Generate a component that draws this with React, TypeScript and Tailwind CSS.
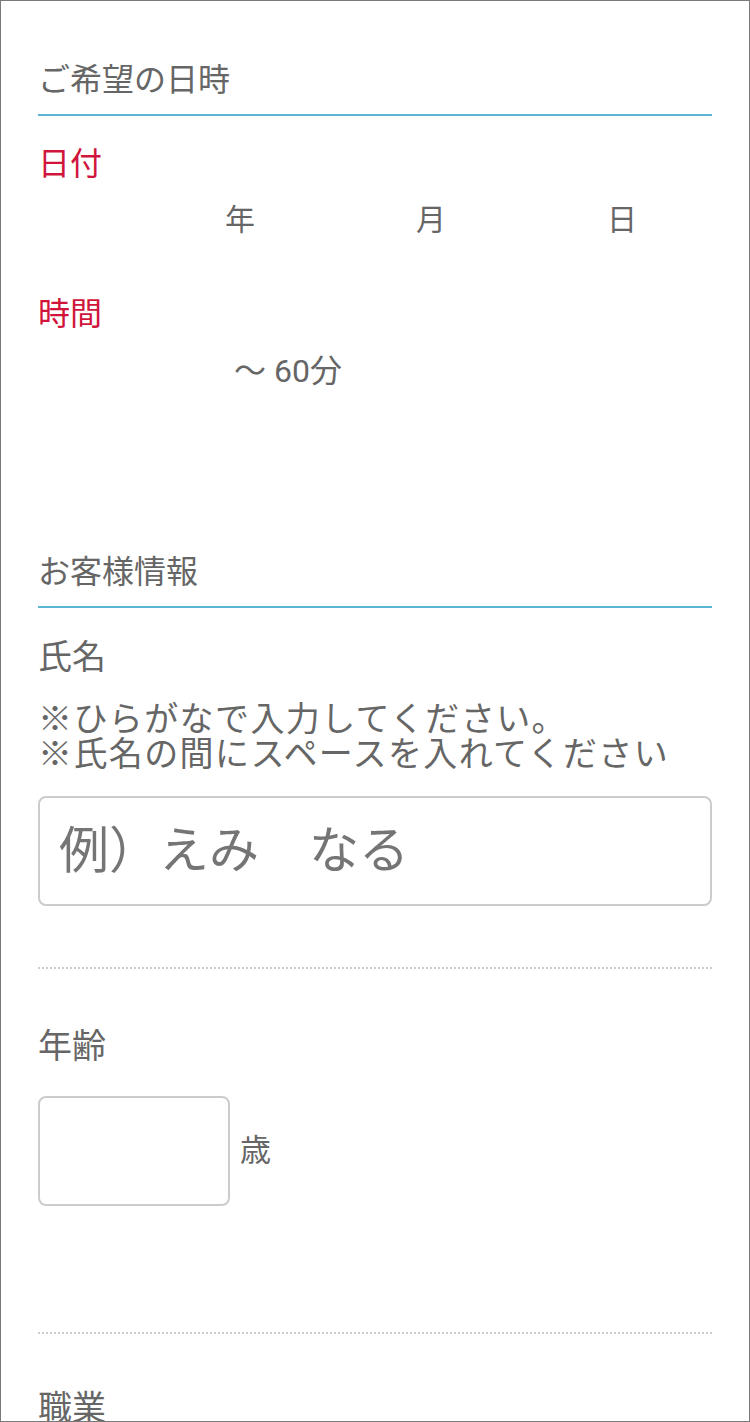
import React from "react";

const font = { fontFamily: 'Roboto, "Noto Sans CJK JP", sans-serif' };

export default function App() {
  return (
    <div
      className="w-[750px] h-[1422px] overflow-hidden bg-white border border-[#7a7a7a] text-[#666666] px-[37px]"
      style={font}
    >
      {/* ご希望の日時 */}
      <div className="pt-[55px] pb-[10px] border-b-2 border-[#5ab4d3] text-[32px] leading-[48px]">
        ご希望の日時
      </div>

      <div className="mt-[24px] text-[32px] leading-[48px] text-[#d0143c]">日付</div>
      <div className="mt-[8px] flex text-[30px] leading-[48px]">
        <div className="w-[187px]" />
        <span>年</span>
        <div className="w-[161px]" />
        <span>月</span>
        <div className="w-[161px]" />
        <span>日</span>
      </div>

      <div className="mt-[46px] text-[32px] leading-[48px] text-[#d0143c]">時間</div>
      <div className="mt-[9px] flex text-[32px] leading-[48px]">
        <div className="w-[196px]" />
        <span>～ 60分</span>
      </div>

      {/* お客様情報 */}
      <div className="mt-[153px] pb-[10px] border-b-2 border-[#5ab4d3] text-[32px] leading-[48px]">
        お客様情報
      </div>

      <div className="mt-[24px] text-[34px] leading-[51px]">氏名</div>
      <div className="mt-[19px] text-[34px] leading-[35px] tracking-[1.4px] whitespace-nowrap">
        <div>※ひらがなで入力してください。</div>
        <div>※氏名の間にスペースを入れてください</div>
      </div>
      <div className="mt-[24px] h-[110px] rounded-[8px] border-2 border-[#cccccc] flex items-center pl-[19px] text-[50px] text-[#757575]">
        例）えみ　なる
      </div>

      <div className="mt-[61px] border-t-2 border-dotted border-[#cccccc]" />

      <div className="mt-[52px] text-[34px] leading-[51px]">年齢</div>
      <div className="mt-[24px] flex items-center">
        <div className="w-[192px] h-[110px] rounded-[8px] border-2 border-[#cccccc]" />
        <span className="ml-[10px] text-[31px] leading-[48px]">歳</span>
      </div>

      <div className="mt-[126px] border-t-2 border-dotted border-[#cccccc]" />

      <div className="mt-[49px] text-[34px] leading-[51px]">職業</div>
    </div>
  );
}
